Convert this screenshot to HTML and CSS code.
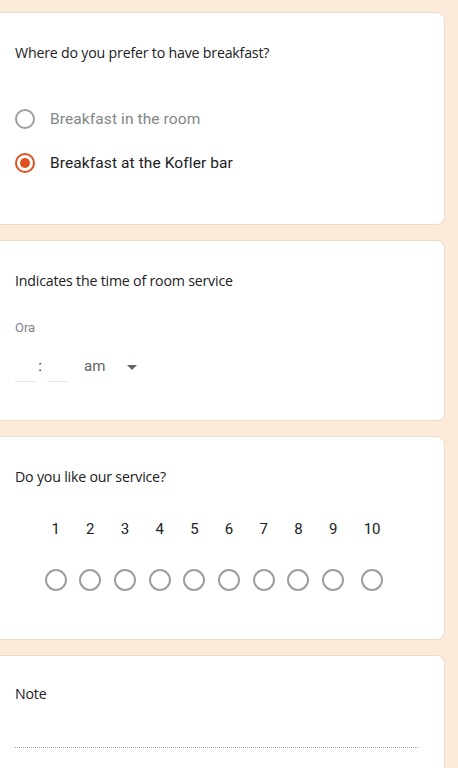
FILE: index.html
```html
<!DOCTYPE html>
<html lang="en">
<head>
<meta charset="utf-8">
<title>Form</title>
<link rel="stylesheet" href="styles.css">
</head>
<body>
<main class="form">
  <section class="card">
    <h2 class="q-title">Where do you prefer to have breakfast?</h2>
    <div class="radios">
      <div class="radio-row">
        <span class="radio"></span>
        <span class="radio-label">Breakfast in the room</span>
      </div>
      <div class="radio-row">
        <span class="radio radio-on"><span class="dot"></span></span>
        <span class="radio-label radio-label-on">Breakfast at the Kofler bar</span>
      </div>
    </div>
  </section>

  <section class="card card-time">
    <h2 class="q-title">Indicates the time of room service</h2>
    <div class="ora">Ora</div>
    <div class="time-row">
      <span class="time-field"></span>
      <span class="colon">:</span>
      <span class="time-field"></span>
      <span class="ampm">am</span>
      <svg class="caret" width="10" height="5" viewBox="0 0 10 5"><path d="M0 0h10L5 5z" fill="#5f6368"/></svg>
    </div>
  </section>

  <section class="card card-scale">
    <h2 class="q-title">Do you like our service?</h2>
    <div class="scale">
      <div class="scale-col"><span class="num">1</span><span class="circle"></span></div>
      <div class="scale-col"><span class="num">2</span><span class="circle"></span></div>
      <div class="scale-col"><span class="num">3</span><span class="circle"></span></div>
      <div class="scale-col"><span class="num">4</span><span class="circle"></span></div>
      <div class="scale-col"><span class="num">5</span><span class="circle"></span></div>
      <div class="scale-col"><span class="num">6</span><span class="circle"></span></div>
      <div class="scale-col"><span class="num">7</span><span class="circle"></span></div>
      <div class="scale-col"><span class="num">8</span><span class="circle"></span></div>
      <div class="scale-col"><span class="num">9</span><span class="circle"></span></div>
      <div class="scale-col scale-col-wide"><span class="num">10</span><span class="circle"></span></div>
    </div>
  </section>

  <section class="card card-note">
    <h2 class="q-title">Note</h2>
    <div class="note-line"></div>
  </section>
</main>
</body>
</html>
```

FILE: styles.css
```css
* { box-sizing: border-box; }
html, body {
  margin: 0;
  padding: 0;
  background: #fdebd9;
  overflow: hidden;
}
body {
  font-family: Roboto, "Liberation Sans", sans-serif;
  color: #202124;
}
.form {
  display: flex;
  flex-direction: column;
  gap: 15px;
  padding-top: 12px;
  margin-left: -10px;
  width: 455px;
}
.card {
  background: #fff;
  border: 1px solid #ecdcca;
  border-radius: 8px;
  padding: 28px 27px 0 24px;
}
.q-title {
  margin: 0;
  font-family: "Open Sans", "Noto Sans", sans-serif;
  font-weight: 400;
  font-size: 14.2px;
  line-height: 24px;
  color: #202124;
  letter-spacing: -0.2px;
}
.radios {
  margin-top: 32px;
  padding-bottom: 39px;
}
.radio-row {
  display: flex;
  align-items: center;
  height: 44px;
}
.radio {
  width: 20px;
  height: 20px;
  border: 2px solid #9e9e9e;
  border-radius: 50%;
  display: flex;
  align-items: center;
  justify-content: center;
}
.radio-on { border-color: #e0501f; }
.dot {
  width: 10px;
  height: 10px;
  border-radius: 50%;
  background: #e0501f;
}
.radio-label {
  margin-left: 15px;
  font-size: 15.5px;
  color: #80868b;
  letter-spacing: 0.1px;
}
.radio-label-on { color: #202124; }

.card-time { padding-bottom: 38px; }
.ora {
  margin-top: 25px;
  font-size: 13px;
  line-height: 20px;
  color: #80868b;
}
.time-row {
  margin-top: 12px;
  display: flex;
  align-items: center;
  height: 32px;
}
.time-field {
  width: 20px;
  height: 32px;
  border-bottom: 1px solid #e3e3e3;
  align-self: flex-start;
}
.colon {
  width: 10px;
  text-align: center;
  font-size: 15px;
  color: #202124;
  margin-right: 2px;
}
.ampm {
  margin-left: 17px;
  font-size: 15px;
  color: #5f6368;
}
.caret { margin-left: 22px; margin-top: 2px; }

.card-scale { padding-bottom: 48px; }
.scale {
  display: flex;
  justify-content: center;
  margin-top: 30px;
}
.scale-col {
  width: 34.7px;
  display: flex;
  flex-direction: column;
  align-items: center;
}
.scale-col-wide { width: 43.3px; }
.num {
  font-size: 15px;
  line-height: 20px;
  color: #202124;
}
.circle {
  margin-top: 30px;
  width: 22px;
  height: 22px;
  border: 2px solid #9e9e9e;
  border-radius: 50%;
}

.card-note { padding-top: 26px; padding-bottom: 60px; }
.note-line {
  margin-top: 41px;
  border-bottom: 1px dotted #9e9e9e;
  width: 403px;
}
```
